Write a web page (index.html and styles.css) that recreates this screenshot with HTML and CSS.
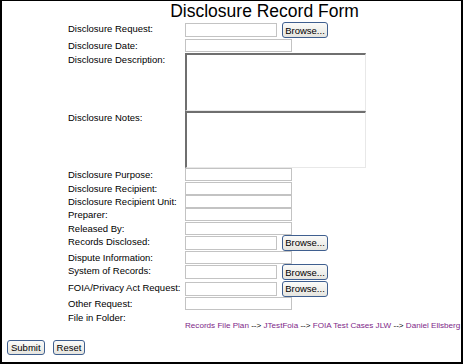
FILE: index.html
```html
<!DOCTYPE html>
<html lang="en">
<head>
  <meta charset="UTF-8" />
  <title>Disclosure Record Form</title>
  <link rel="stylesheet" href="styles.css">
</head>
<body>
  <div class="page">
    <form class="record-form">
      <h1 class="title">Disclosure Record Form</h1>

      <div class="grid">
        <!-- file rows have a Browse button -->
        <label class="lbl r-file">Disclosure Request:</label>
        <div class="fld r-file"><span class="file-box"></span><button type="button" class="browse">Browse...</button></div>

        <label class="lbl r-14">Disclosure Date:</label>
        <div class="fld r-14"><input type="text" class="txt"></div>

        <label class="lbl r-desc">Disclosure Description:</label>
        <div class="fld r-desc"><textarea class="area desc"></textarea></div>

        <label class="lbl r-notes">Disclosure Notes:</label>
        <div class="fld r-notes"><textarea class="area notes"></textarea></div>

        <label class="lbl r-14">Disclosure Purpose:</label>
        <div class="fld r-14"><input type="text" class="txt"></div>

        <label class="lbl r-13">Disclosure Recipient:</label>
        <div class="fld r-13"><input type="text" class="txt"></div>

        <label class="lbl r-13">Disclosure Recipient Unit:</label>
        <div class="fld r-13"><input type="text" class="txt"></div>

        <label class="lbl r-14">Preparer:</label>
        <div class="fld r-14"><input type="text" class="txt"></div>

        <label class="lbl r-13">Released By:</label>
        <div class="fld r-13"><input type="text" class="txt"></div>

        <label class="lbl r-file">Records Disclosed:</label>
        <div class="fld r-file"><span class="file-box"></span><button type="button" class="browse">Browse...</button></div>

        <label class="lbl r-13">Dispute Information:</label>
        <div class="fld r-13"><input type="text" class="txt"></div>

        <label class="lbl r-file">System of Records:</label>
        <div class="fld r-file"><span class="file-box"></span><button type="button" class="browse">Browse...</button></div>

        <label class="lbl r-file">FOIA/Privacy Act Request:</label>
        <div class="fld r-file"><span class="file-box"></span><button type="button" class="browse">Browse...</button></div>

        <label class="lbl r-14">Other Request:</label>
        <div class="fld r-14"><input type="text" class="txt"></div>

        <label class="lbl r-folder">File in Folder:</label>
        <div class="fld r-folder"></div>

        <div class="lbl"></div>
        <div class="path">
          <a href="#">Records File Plan</a> --&gt; <a href="#">JTestFoia</a> --&gt; <a href="#">FOIA Test Cases JLW</a> --&gt; <a href="#">Daniel Ellsberg</a>
        </div>
      </div>
    </form>

    <div class="actions">
      <button type="submit" class="btn">Submit</button>
      <button type="reset" class="btn">Reset</button>
    </div>
  </div>
</body>
</html>
```

FILE: styles.css
```css
/* Global */
html, body {
  margin: 0;
  background: #fff;
}

body {
  font-family: 'Liberation Sans', Arial, sans-serif;
  color: #000;
}

.page {
  box-sizing: border-box;
  width: 463px;
  height: 364px;
  border: 2px solid #000;
  border-top-width: 1px;
  overflow: hidden;
}

/* Form block (centre of title lines up with this block) */
.record-form {
  margin-left: 66px;
  width: 393px;
}

.title {
  margin: 0;
  height: 21px;
  font-size: 17.5px;
  line-height: 21px;
  font-weight: normal;
  text-align: center;
}

.grid {
  display: grid;
  grid-template-columns: 117px 276px;
}

.lbl {
  box-sizing: border-box;
  font-size: 9.5px;
  line-height: 12px;
  padding-top: 1px;
  white-space: nowrap;
}

.fld {
  display: flex;
  align-items: flex-start;
}

/* Row heights */
.r-13 { height: 13px; }
.r-14 { height: 14px; }
.r-file { height: 16.5px; }
.r-desc { height: 58px; }
.r-notes { height: 57px; }
.r-folder { height: 10px; }

/* Inputs */
.txt {
  box-sizing: border-box;
  width: 107px;
  height: 13px;
  margin: 0;
  padding: 0;
  border: 1px solid #c3c3c3;
  background: #fff;
}

.file-box {
  box-sizing: border-box;
  width: 92px;
  height: 14px;
  margin-top: 1px;
  border: 1px solid #c3c3c3;
  background: #fff;
}

.browse {
  box-sizing: border-box;
  height: 16px;
  width: 46px;
  margin: 0 0 0 5px;
  padding: 0;
  font-family: 'Liberation Sans', Arial, sans-serif;
  font-size: 9.5px;
  color: #000;
  border: 1px solid #3f5f8f;
  border-radius: 3px;
  background: linear-gradient(#fbfbf9, #e6e5df);
}

.area {
  box-sizing: border-box;
  width: 181px;
  margin: 0;
  padding: 0;
  resize: none;
  border-style: solid;
  border-width: 2px 1px 1px 2px;
  border-color: #6f6f6f #e8e8e8 #e8e8e8 #6f6f6f;
  background: #fff;
}

.desc { height: 58px; }
.notes { height: 57px; }

/* Folder path */
.path {
  font-size: 8.1px;
  line-height: 10px;
  white-space: nowrap;
  color: #000;
}

.path a {
  color: #7e1f88;
  text-decoration: none;
}

/* Submit / Reset */
.actions {
  display: flex;
  gap: 8px;
  padding: 9px 0 0 5px;
}

.btn {
  box-sizing: border-box;
  height: 15px;
  margin: 0;
  padding: 0 3px;
  font-family: 'Liberation Sans', Arial, sans-serif;
  font-size: 9.5px;
  color: #000;
  border: 1px solid #3f5f8f;
  border-radius: 3px;
  background: linear-gradient(#fbfbf9, #e6e5df);
}
```
